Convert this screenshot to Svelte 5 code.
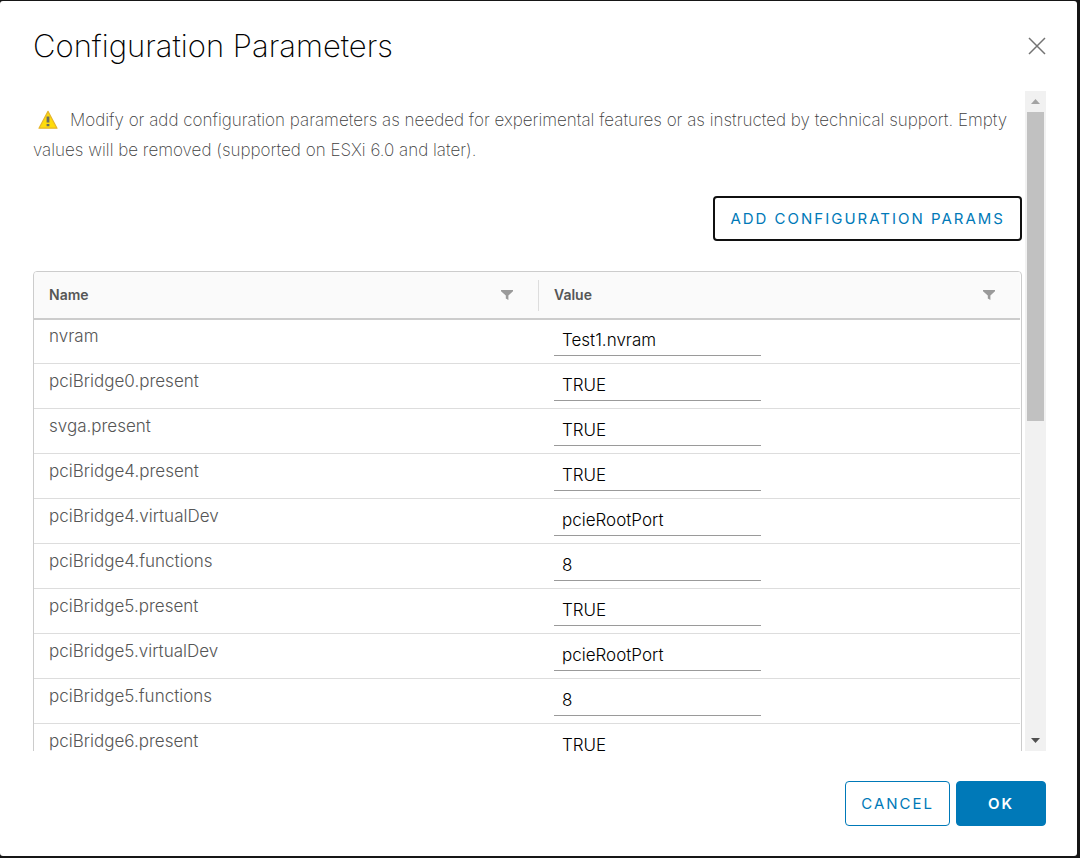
<script lang="ts">
	type Param = { name: string; value: string };

	let params = $state<Param[]>([
		{ name: 'nvram', value: 'Test1.nvram' },
		{ name: 'pciBridge0.present', value: 'TRUE' },
		{ name: 'svga.present', value: 'TRUE' },
		{ name: 'pciBridge4.present', value: 'TRUE' },
		{ name: 'pciBridge4.virtualDev', value: 'pcieRootPort' },
		{ name: 'pciBridge4.functions', value: '8' },
		{ name: 'pciBridge5.present', value: 'TRUE' },
		{ name: 'pciBridge5.virtualDev', value: 'pcieRootPort' },
		{ name: 'pciBridge5.functions', value: '8' },
		{ name: 'pciBridge6.present', value: 'TRUE' }
	]);

	const columns = ['Name', 'Value'];

	let viewport: HTMLDivElement;

	function scrollRows(step: number) {
		viewport.scrollBy({ top: step * 45 });
	}

	function addParam() {
		params.unshift({ name: '', value: '' });
	}
</script>

<div class="modal" role="dialog" aria-labelledby="title">
	<header>
		<h1 id="title">Configuration Parameters</h1>
		<button class="close" type="button" aria-label="Close">
			<svg width="18" height="18" viewBox="0 0 18 18">
				<path d="M1 1 17 17M17 1 1 17" fill="none" stroke="#737373" stroke-width="1.5" />
			</svg>
		</button>
	</header>

	<div class="body">
		<div class="viewport" bind:this={viewport}>
			<p class="hint">
				<svg class="warn" width="20" height="20" viewBox="0 0 20 20">
					<path
						d="M10 1.4 19 18.2H1Z"
						fill="#ffdc0b"
						stroke="#e6b52c"
						stroke-width="1.2"
						stroke-linejoin="round"
					/>
					<path d="M8.6 6.5h2.8v6H8.6zM8.6 14h2.8v2.3H8.6z" fill="#6b6b60" />
				</svg>Modify or add configuration parameters as needed for experimental features or as instructed
				by technical support. Empty values will be removed (supported on ESXi 6.0 and later).
			</p>

			<div class="toolbar">
				<button class="btn add" type="button" onclick={addParam}>Add configuration params</button>
			</div>

			<div class="grid">
				<table>
					<thead>
						<tr>
							{#each columns as column (column)}
								<th scope="col">
									<div class="head">
										<span>{column}</span>
										<button class="filter" type="button" aria-label="Filter {column}">
											<svg width="12" height="10" viewBox="0 0 12 10">
												<path d="M0 0h12v1.2L7.4 5.4V10L4.8 8.6V5.4L0 1.2Z" fill="#9a9a9a" />
											</svg>
										</button>
									</div>
								</th>
							{/each}
						</tr>
					</thead>
					<tbody>
						{#each params as param, i}
							<tr>
								<td id="param-{i}">{param.name}</td>
								<td><input type="text" aria-labelledby="param-{i}" bind:value={param.value} /></td>
							</tr>
						{/each}
					</tbody>
				</table>
			</div>
		</div>

		<div class="scrollbar">
			<button type="button" aria-label="Scroll up" onclick={() => scrollRows(-1)}>
				<svg width="9" height="5" viewBox="0 0 9 5"><path d="M4.5 0 9 5H0Z" fill="#a3a3a3" /></svg>
			</button>
			<div class="track"><div class="thumb"></div></div>
			<button type="button" aria-label="Scroll down" onclick={() => scrollRows(1)}>
				<svg width="9" height="5" viewBox="0 0 9 5"><path d="M0 0h9L4.5 5Z" fill="#505050" /></svg>
			</button>
		</div>
	</div>

	<footer>
		<button class="btn" type="button">Cancel</button>
		<button class="btn primary" type="button">OK</button>
	</footer>
</div>

<style>
	:global(body) {
		background: #161616;
	}
	.modal {
		box-sizing: border-box;
		display: flex;
		flex-direction: column;
		height: calc(100vh - 3px);
		margin: 1px 3px 2px 0;
		padding: 0 31px 30px 33px;
		border-radius: 3px;
		background: #fff;
		color: #565656;
		font-family: Inter, 'Open Sans', sans-serif;
		font-size: 17px;
		font-weight: 300;
	}
	button {
		margin: 0;
		padding: 0;
		border: 0;
		background: none;
		font: inherit;
		cursor: pointer;
	}
	svg {
		display: block;
	}
	header {
		display: flex;
		flex: none;
		align-items: center;
		justify-content: space-between;
		height: 90px;
	}
	h1 {
		margin: 0;
		color: #000;
		font-size: 31px;
		font-weight: 250;
		line-height: 88px;
	}
	.body {
		display: flex;
		flex: 1;
		gap: 3px;
		min-height: 0;
	}
	.viewport {
		flex: 1;
		min-width: 0;
		overflow: hidden;
	}
	.hint {
		margin: 0;
		padding-top: 14px;
		color: #404040;
		font-weight: 200;
		line-height: 30px;
	}
	.warn {
		display: inline-block;
		margin: 0 12px 0 5px;
		vertical-align: -4px;
	}
	.toolbar {
		display: flex;
		justify-content: flex-end;
		padding: 31px 0 30px;
	}
	.btn {
		box-sizing: border-box;
		min-width: 90px;
		height: 45px;
		padding: 0 15px;
		border: 1px solid #0079b8;
		border-radius: 4px;
		color: #0079b8;
		font-size: 15px;
		font-weight: 400;
		letter-spacing: 2px;
		text-transform: uppercase;
	}
	.add {
		border: 2px solid #101010;
	}
	.primary {
		background: #0079b8;
		color: #fff;
		font-weight: 600;
	}
	.grid {
		padding-right: 1px;
		border: 1px solid #ccc;
		border-radius: 4px;
		overflow: hidden;
	}
	table {
		width: 100%;
		border-spacing: 0;
		table-layout: fixed;
	}
	th {
		height: 46px;
		padding: 0;
		border-bottom: 1px solid #ccc;
		background: #fafafa;
		box-shadow: 0 1px #ccc;
		font-size: 14px;
		font-weight: 600;
		text-align: left;
	}
	th:first-child {
		width: 505px;
	}
	.head {
		display: flex;
		align-items: center;
		justify-content: space-between;
		height: 31px;
		padding: 0 25px 0 15px;
		line-height: 16px;
	}
	th:first-child .head {
		border-right: 1px solid #ddd;
	}
	td {
		box-sizing: border-box;
		height: 45px;
		padding: 2px 15px 0;
		border-bottom: 1px solid #ddd;
		line-height: 30px;
		vertical-align: top;
	}
	input {
		box-sizing: border-box;
		display: block;
		width: 207px;
		height: 31px;
		margin-top: 4px;
		padding: 0 8px;
		border: 0;
		border-bottom: 1px solid #9a9a9a;
		background: none;
		color: #000;
		font: inherit;
		outline: 0;
	}
	.scrollbar {
		display: flex;
		flex: none;
		flex-direction: column;
		width: 21px;
		background: #f1f1f1;
	}
	.scrollbar button {
		display: grid;
		place-items: center;
		height: 21px;
	}
	.track {
		flex: 1;
		padding: 0 2px;
	}
	.thumb {
		height: 50%;
		background: #c1c1c1;
	}
	footer {
		display: flex;
		flex: none;
		gap: 6px;
		justify-content: flex-end;
		padding-top: 30px;
	}
</style>
